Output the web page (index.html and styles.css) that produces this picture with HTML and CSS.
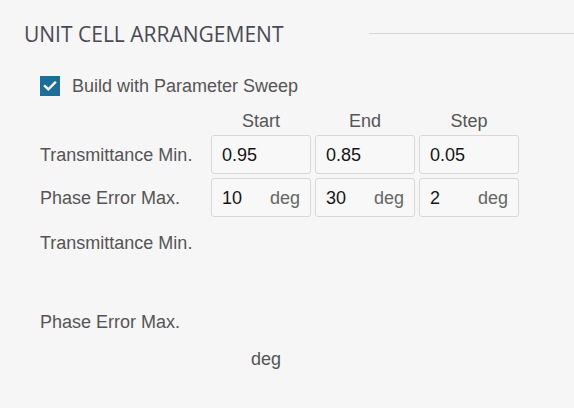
FILE: index.html
```html
<!DOCTYPE html>
<html>
<head>
<meta charset="utf-8">
<link rel="stylesheet" href="styles.css">
</head>
<body>
<div class="panel">
  <div class="panel-head">
    <h2 class="title">UNIT CELL ARRANGEMENT</h2>
    <div class="rule"></div>
  </div>
  <div class="content">
    <label class="check-row">
      <span class="checkbox">
        <svg width="20" height="20" viewBox="0 0 20 20"><path d="M5 10.2 L8.4 13.4 L15 6.6" fill="none" stroke="#fff" stroke-width="2.4" stroke-linecap="square"/></svg>
      </span>
      <span class="check-label">Build with Parameter Sweep</span>
    </label>
    <div class="sweep">
      <div></div>
      <div class="col-head">Start</div>
      <div class="col-head">End</div>
      <div class="col-head">Step</div>

      <div class="row-label">Transmittance Min.</div>
      <div class="field"><span class="val">0.95</span></div>
      <div class="field"><span class="val">0.85</span></div>
      <div class="field"><span class="val">0.05</span></div>

      <div class="row-label">Phase Error Max.</div>
      <div class="field"><span class="val">10</span><span class="unit">deg</span></div>
      <div class="field"><span class="val">30</span><span class="unit">deg</span></div>
      <div class="field"><span class="val">2</span><span class="unit">deg</span></div>
    </div>
    <div class="single">
      <div class="row-label lbl-trans">Transmittance Min.</div>
      <div class="row-label lbl-phase">Phase Error Max.</div>
      <div class="unit-alone">deg</div>
    </div>
  </div>
</div>
</body>
</html>
```

FILE: styles.css
```css
html, body {
  margin: 0;
  padding: 0;
  background: #f6f6f6;
}
body {
  width: 574px;
  height: 408px;
  overflow: hidden;
  font-family: "Liberation Sans", Arial, sans-serif;
  font-size: 18px;
  color: #555555;
}
.panel-head {
  display: flex;
  align-items: flex-start;
  padding-top: 24px;
}
.title {
  margin: 0 0 0 24px;
  font-family: "Open Sans", "Noto Sans", sans-serif;
  font-weight: 500;
  font-size: 21px;
  line-height: 20px;
  color: #4a4a52;
  white-space: nowrap;
}
.rule {
  flex: 1;
  margin-left: 86px;
  margin-top: 9px;
  border-top: 1px solid #d6d6d6;
}
.content {
  padding-left: 40px;
}
.check-row {
  display: flex;
  align-items: center;
  gap: 12px;
  margin-top: 32px;
  line-height: 20px;
}
.checkbox {
  width: 20px;
  height: 20px;
  background: #1c6f98;
  display: block;
}
.checkbox svg {
  display: block;
}
.sweep {
  display: grid;
  grid-template-columns: 167px 100px 100px 100px;
  grid-template-rows: 20px 39px 39px;
  column-gap: 4px;
  row-gap: 4px;
  margin-top: 15px;
  line-height: 20px;
}
.sweep .col-head {
  text-align: center;
  margin-bottom: 1px;
}
.row-label {
  display: flex;
  align-items: center;
  white-space: nowrap;
}
.field {
  box-sizing: border-box;
  height: 39px;
  border: 1px solid #d8d8d8;
  border-radius: 3px;
  background: #f8f8f8;
  display: flex;
  align-items: center;
  justify-content: space-between;
  padding: 0 10px 0 10px;
}
.sweep .col-head + .row-label,
.sweep .field + .row-label {
  padding-top: 1px;
}
.val {
  color: #151515;
}
.unit {
  color: #666666;
}
.single {
  line-height: 20px;
  margin-top: 16px;
}
.lbl-phase {
  margin-top: 59px;
}
.unit-alone {
  margin-top: 17px;
  padding-left: 211px;
  color: #555555;
}
```
